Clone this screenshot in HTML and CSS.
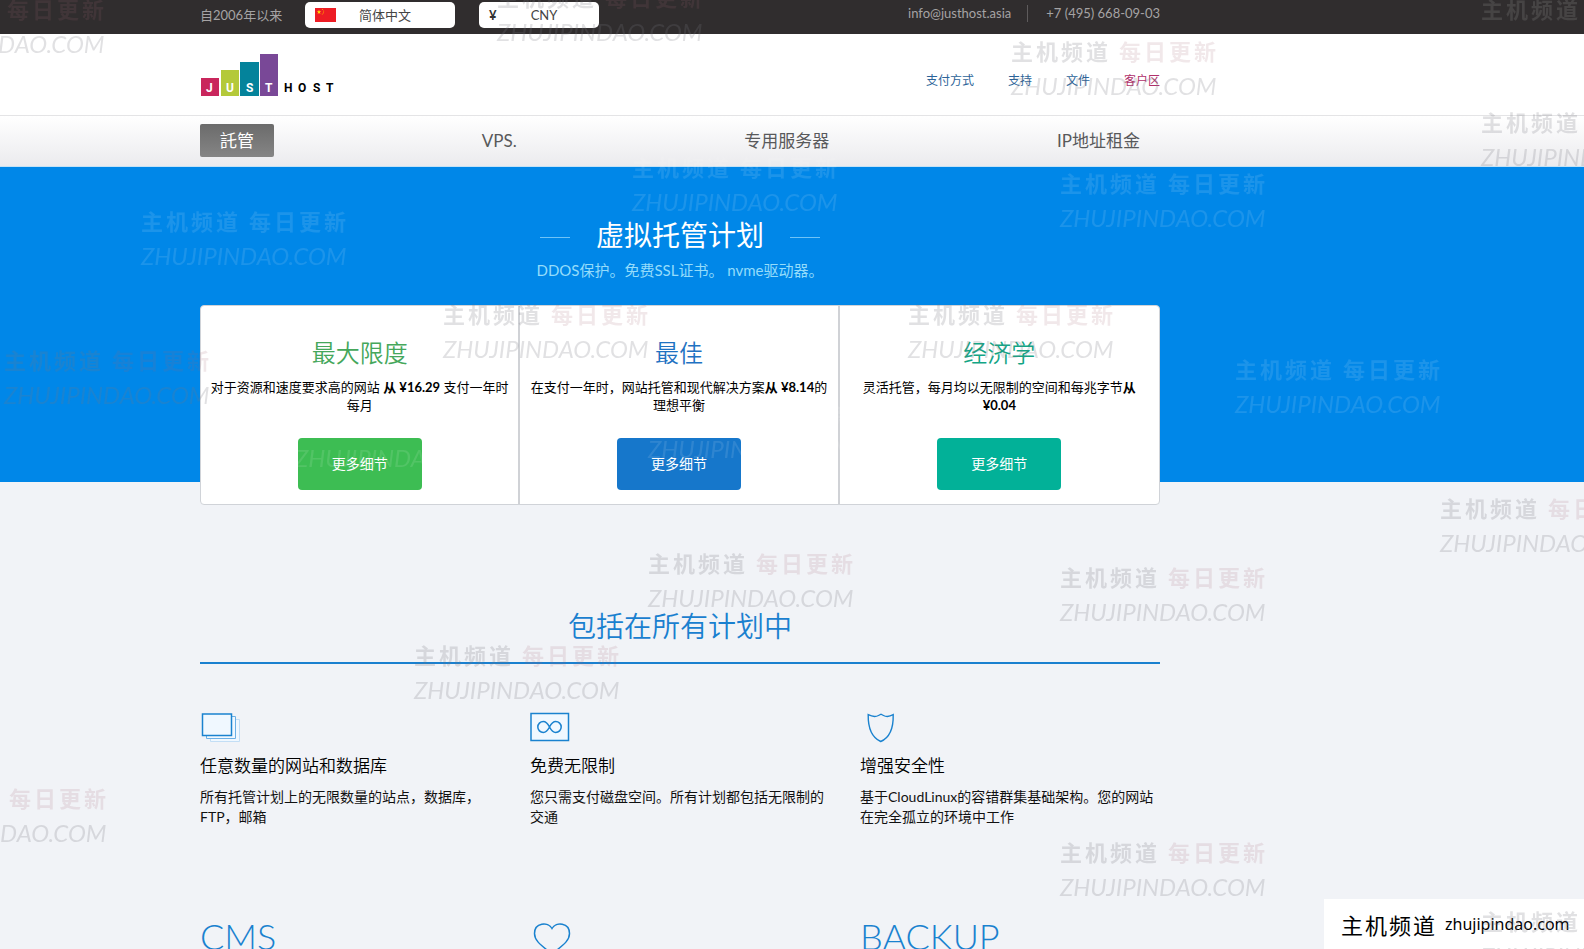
FILE: index.html
```html
<!DOCTYPE html>
<html lang="zh-CN">
<head>
<meta charset="utf-8">
<meta name="viewport" content="width=device-width, initial-scale=1">
<title>JustHost</title>
<link rel="stylesheet" href="styles.css">
</head>
<body>
<div class="topbar">
  <div class="wrap topbar-row">
    <span class="since">自2006年以来</span>
    <label class="picker picker-lang">
      <svg class="flag" viewBox="0 0 21 14" width="21" height="14" aria-hidden="true"><path fill="#ed1c24" d="M0 0h21v14H0z"/><path fill="#ffde00" d="M4 1.800l.6 1.500h1.600l-1.300 1 .5 1.600L4 5l-1.400.9.500-1.600-1.300-1h1.600z"/><g fill="#f90"><circle cx="7.500" cy="1.500" r=".6"/><circle cx="8.600" cy="3" r=".6"/><circle cx="8.500" cy="4.800" r=".6"/><circle cx="7.300" cy="6" r=".6"/></g></svg>
      <select aria-label="语言"><option>简体中文</option></select>
    </label>
    <label class="picker picker-money">
      <span class="sign">¥</span>
      <select aria-label="货币"><option>CNY</option></select>
    </label>
    <div class="contacts">
      <a href="#">info@justhost.asia</a>
      <a class="phone" href="#">+7 (495) 668-09-03</a>
    </div>
  </div>
</div>

<header class="header">
  <div class="wrap header-row">
    <a class="logo" href="#" aria-label="JustHost">
      <svg viewBox="0 0 140 43" width="140" height="43" font-family="Roboto, sans-serif" font-weight="700" font-size="12">
        <path fill="#c9265c" d="M1 24h18v18H1z"/><path fill="#b4c93a" d="M21 16h18v26H21z"/><path fill="#04839b" d="M40 8h19v34H40z"/><path fill="#794897" d="M60 0h18v42H60z"/>
        <text fill="#fff" y="38" x="6 26 46 65">JUST</text>
        <text fill="#000" y="38" x="84 98 113 126">HOST</text>
      </svg>
    </a>
    <nav class="links">
      <a href="#">支付方式</a><a href="#">支持</a><a href="#">文件</a><a class="client" href="#">客户区</a>
    </nav>
  </div>
</header>

<nav class="menu">
  <div class="wrap menu-row">
    <a class="active" href="#">託管</a><a href="#">VPS.</a><a href="#">专用服务器</a><a href="#">IP地址租金</a>
  </div>
</nav>

<main>
  <section class="hero">
    <div class="wrap">
      <h1>虚拟托管计划</h1>
      <p class="lead">DDOS保护。免费SSL证书。 nvme驱动器。</p>
      <div class="plans">
        <article class="plan green">
          <h2>最大限度</h2>
          <p>对于资源和速度要求高的网站 <b>从 ¥16.29</b> 支付一年时每月</p>
          <button type="button">更多细节</button>
        </article>
        <article class="plan blue">
          <h2>最佳</h2>
          <p>在支付一年时，网站托管和现代解决方案<b>从 ¥8.14</b>的理想平衡</p>
          <button type="button">更多细节</button>
        </article>
        <article class="plan teal">
          <h2>经济学</h2>
          <p>灵活托管，每月均以无限制的空间和每兆字节<b>从 ¥0.04</b></p>
          <button type="button">更多细节</button>
        </article>
      </div>
    </div>
  </section>

  <section class="included wrap">
    <h2>包括在所有计划中</h2>
    <div class="features">
      <article>
        <svg class="icon" viewBox="0 0 42 34" width="42" height="34" fill="#f0f8ff"><path stroke="#c3def5" d="M10.500 9.500h29v22h-29z"/><path stroke="#6cb0e5" d="M6.500 6.500h29v22h-29z"/><path stroke="#1a82cf" stroke-width="1.500" d="M2.500 4h29v21.500h-29z"/></svg>
        <h3>任意数量的网站和数据库</h3>
        <p>所有托管计划上的无限数量的站点，数据库，FTP，邮箱</p>
      </article>
      <article>
        <svg class="icon" viewBox="0 0 42 34" width="42" height="34" fill="none" stroke="#1a82cf" stroke-width="1.500"><path fill="#f0f8ff" d="M1 3.500h37.500v27H1z"/><path d="M19.500 17c-2-3.800-3.600-5.500-6.200-5.500a5.500 5.500 0 0 0 0 11c2.600 0 4.200-1.700 6.200-5.500s3.600-5.500 6.200-5.500a5.500 5.500 0 0 1 0 11c-2.600 0-4.200-1.700-6.200-5.500z"/></svg>
        <h3>免费无限制</h3>
        <p>您只需支付磁盘空间。所有计划都包括无限制的交通</p>
      </article>
      <article>
        <svg class="icon" viewBox="0 0 42 34" width="42" height="34" fill="none" stroke="#1a82cf" stroke-width="1.400"><path d="M8.200 4.700c4 2 8 2 10.300.8L21 4.200l2.500 1.300c2.300 1.200 6 1.200 9.700-.8C33.500 18 30 27.500 20.700 31.500 12 27.500 8 18 8.200 4.700z"/></svg>
        <h3>增强安全性</h3>
        <p>基于CloudLinux的容错群集基础架构。您的网站在完全孤立的环境中工作</p>
      </article>
      <article><span class="word">CMS</span></article>
      <article>
        <svg class="icon" viewBox="0 0 42 40" width="42" height="40" fill="none" stroke="#1a82cf" stroke-width="1.500"><path d="M22 12.500C18 5.500 4.500 6.500 4.500 17.500 4.500 26 14 31 22 38c8-7 17.500-12 17.500-20.500 0-11-13.500-12-17.500-5z"/></svg>
      </article>
      <article><span class="word">BACKUP</span></article>
    </div>
  </section>
</main>

<div class="marks" aria-hidden="true"></div>
<aside class="badge"><strong>主机频道</strong><span>zhujipindao.com</span></aside>
<script src="marks.js"></script>
</body>
</html>
```
FILE: marks.js
```js
// Each watermark: left, top, and whether it uses the light ink.
const marks = [
  [-101, -8, false], [497, -20, false], [1481, -8, true], [1011, 34, false],
  [1481, 105, false], [632, 150, true], [1060, 166, true], [141, 204, true],
  [443, 297, false], [908, 297, false], [4, 343, false], [1235, 352, true],
  [295, 406, true], [648, 397, true], [1440, 491, false], [648, 546, false],
  [1060, 560, false], [414, 638, false], [-99, 781, false], [1060, 835, false],
  [1481, 904, false]
];
const layer = document.querySelector('.marks');
for (const [x, y, light] of marks) {
  const el = document.createElement('div');
  el.className = light ? 'mark light' : 'mark';
  el.style.left = x + 'px';
  el.style.top = y + 'px';
  el.innerHTML = '<div class="zh">主机频道 <i>每日更新</i></div><div class="en">ZHUJIPINDAO.COM</div>';
  layer.append(el);
}
```
FILE: styles.css
```css
* { box-sizing: border-box; }
body {
  margin: 0;
  height: 100vh;
  overflow: hidden;
  position: relative;
  background: #f1f3f7;
  color: #111;
  font-family: Lato, "Noto Sans CJK SC", sans-serif;
  font-size: 14px;
}
h1, h2, h3, p { margin: 0; font-weight: 400; }
a { color: inherit; text-decoration: none; }
.wrap { max-width: 960px; margin-left: 200px; }

.topbar { background: #302d2e; color: #a5a3a4; font-size: 13px; }
.topbar-row { display: flex; height: 34px; padding-top: 2px; align-items: flex-start; line-height: 26px; }
.since { width: 105px; }
.picker { position: relative; height: 26px; margin-right: 24px; }
.picker-lang { width: 150px; }
.picker-money { width: 120px; }
.picker select {
  appearance: none;
  width: 100%;
  height: 26px;
  border: 0;
  border-radius: 5px;
  background: #fff;
  color: #444;
  font: inherit;
  text-align: center;
  text-align-last: center;
  padding: 0 0 0 10px;
}
.flag { position: absolute; left: 10px; top: 6px; }
.sign { position: absolute; left: 10px; color: #333; font-weight: 700; }
.contacts { margin-left: auto; display: flex; line-height: 22px; }
.phone { margin-left: 16px; padding-left: 19px; position: relative; }
.phone::before { content: ""; position: absolute; left: 0; top: 3px; height: 17px; border-left: 1px solid #5e5b5c; }

.header { background: #fff; }
.header-row { display: flex; justify-content: space-between; align-items: flex-end; padding: 20px 0 18px; }
.logo { height: 43px; }
.logo svg { display: block; }
.links { display: flex; gap: 34px; font-size: 12px; line-height: 32px; color: #2c6398; }
.links .client { color: #b0306a; }

.menu { border-top: 1px solid #e4e4e6; border-bottom: 1px solid #c5e2f5; background: linear-gradient(#fff, #ebebee); }
.menu-row { display: flex; justify-content: space-between; padding: 8px 0 9px; }
.menu a { padding: 0 20px; font-size: 17px; line-height: 33px; color: #58595b; }
.menu .active { background: linear-gradient(#6b6b6b, #858585); color: #fff; border-radius: 2px; }

.hero { display: flow-root; background: #0087e8; padding-top: 48px; }
.hero .wrap { margin-bottom: -23px; }
.hero h1 {
  display: flex;
  justify-content: center;
  align-items: center;
  gap: 26px;
  font-size: 28px;
  line-height: 40px;
  color: #fff;
}
.hero h1::before, .hero h1::after { content: ""; width: 30px; height: 1px; background: #6fc3f7; margin-top: 4px; }
.lead { text-align: center; font-size: 15px; line-height: 30px; color: #94dcfb; }
.plans {
  display: grid;
  grid-template-columns: repeat(3, 1fr);
  margin-top: 20px;
  background: #fff;
  border: 1px solid #d0d3d8;
  border-radius: 4px;
}
.plan { padding: 27px 8px 14px; text-align: center; color: #000; }
.plan:not(:last-child) { border-right: 2px solid #d0d2d6; }
.plan h2 { font-size: 24px; line-height: 40px; font-weight: 350; }
.plan p { font-size: 13px; line-height: 18px; margin: 5px 0 24px; }
.plan button {
  width: 124px;
  height: 52px;
  border: 0;
  border-radius: 4px;
  color: #fff;
  font: inherit;
  display: block;
  margin: 0 auto;
  padding: 0 0 2px;
}
.green h2 { color: #45a75b; }
.green button { background: #3dbd53; }
.blue h2 { color: #1f72c2; }
.blue button { background: #1677cb; }
.teal h2 { color: #13a585; }
.teal button { background: #02b198; }

.included { padding-top: 124px; }
.included > h2 {
  text-align: center;
  font-size: 28px;
  line-height: 40px;
  font-weight: 350;
  color: #1a80cf;
  padding-bottom: 16px;
  border-bottom: 2px solid #1a80cf;
}
.features { display: grid; grid-template-columns: repeat(3, 1fr); gap: 89px 30px; margin-top: 46px; }
.icon { display: block; }
.features h3 { font-size: 17px; line-height: 24px; margin: 10px 0 9px; font-weight: 350; color: #000; }
.features p { line-height: 20px; }
.word { display: block; font-size: 36px; font-weight: 300; line-height: 40px; color: #1a82cf; }

.marks { position: absolute; inset: 0; overflow: hidden; pointer-events: none; z-index: 3; }
.mark { position: absolute; white-space: nowrap; color: rgba(120, 120, 128, 0.22); }
.mark i { font-style: normal; color: rgba(160, 100, 115, 0.15); }
.mark .zh { font-family: "Noto Sans CJK SC", sans-serif; font-weight: 700; font-size: 22px; letter-spacing: 3px; line-height: 32px; }
.mark .en { font-style: italic; font-size: 24px; line-height: 40px; }
.mark.light, .mark.light i { color: rgba(255, 255, 255, 0.11); }

.badge {
  position: fixed;
  right: 0;
  bottom: 0;
  height: 50px;
  width: 260px;
  padding-left: 17px;
  display: flex;
  align-items: center;
  gap: 8px;
  background: #fff;
  color: #000;
  z-index: 2;
}
.badge strong { font-size: 22px; font-weight: 400; letter-spacing: 2px; }
.badge span { font-family: "Noto Sans", sans-serif; font-size: 16px; }
```
